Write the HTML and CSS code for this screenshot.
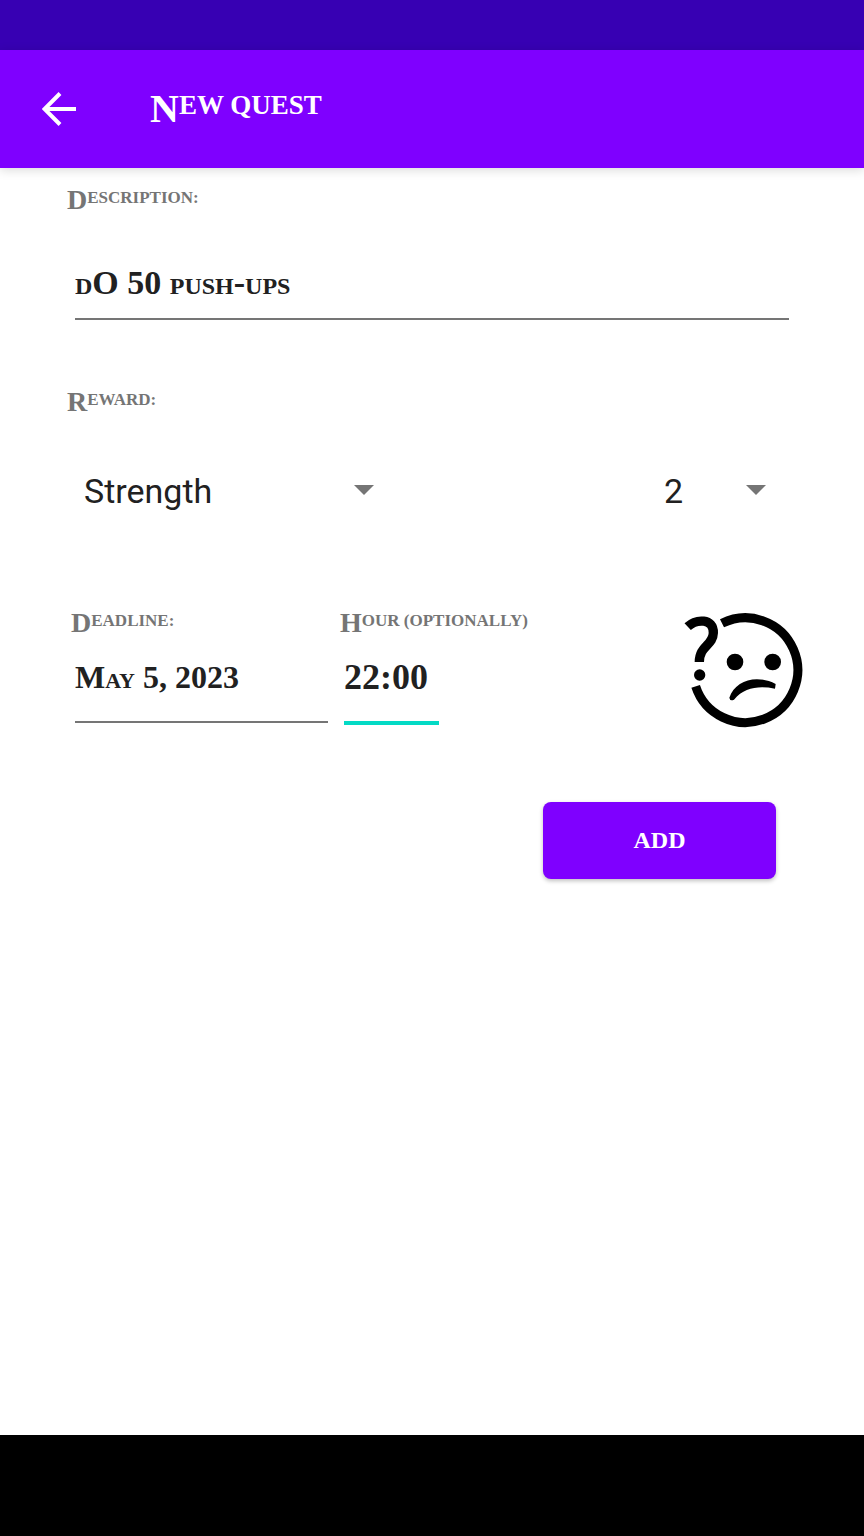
FILE: index.html
```html
<!DOCTYPE html>
<html lang="en">
<head>
<meta charset="utf-8">
<meta name="viewport" content="width=device-width, initial-scale=1">
<title>New quest</title>
<link rel="stylesheet" href="styles.css">
</head>
<body>
<div class="status-bar"></div>
<header class="app-bar">
  <button class="back" type="button" aria-label="Back">
    <svg viewBox="0 0 34 34" width="34" height="34"><path d="M18 1.5 L2.5 17 L18 32.5 M2.5 17 H34" fill="none" stroke="#fff" stroke-width="4"/></svg>
  </button>
  <h1 class="title">New quest</h1>
</header>
<main class="page">
  <form class="form">
    <label class="label" for="description">Description:</label>
    <input class="field field-description" id="description" type="text" value="dO 50 push-ups">

    <label class="label" for="reward">Reward:</label>
    <div class="reward-row">
      <div class="picker picker-skill">
        <select class="select" id="reward"><option>Strength</option></select>
      </div>
      <div class="picker picker-amount">
        <select class="select" aria-label="Reward amount"><option>2</option></select>
      </div>
    </div>

    <div class="when-row">
      <div class="when-date">
        <label class="label" for="deadline">Deadline:</label>
        <input class="field field-date" id="deadline" type="text" value="May 5, 2023">
      </div>
      <div class="when-hour">
        <label class="label" for="hour">Hour (optionally)</label>
        <input class="field field-hour" id="hour" type="text" value="22:00">
      </div>
      <button class="help" type="button" aria-label="Help">
        <svg viewBox="72 60 360 354" width="120" height="118">
          <path d="M186 97 A157 157 0 1 1 107 286" fill="none" stroke="#000" stroke-width="27"/>
          <path d="M83 107 C108 84 161 80 160 126 C159 163 118 164 118 213" fill="none" stroke="#000" stroke-width="28"/>
          <circle cx="119" cy="252" r="17"/>
          <circle cx="225" cy="213" r="25"/>
          <circle cx="338" cy="213" r="25"/>
          <path d="M208 320 C226 267 290 249 347 279 L345 293 C298 284 254 288 222 326 Q210 332 208 320 Z"/>
        </svg>
      </button>
    </div>

    <button class="add" type="button">ADD</button>
  </form>
</main>
<div class="nav-bar"></div>
</body>
</html>
```
FILE: styles.css
```css
* {
  box-sizing: border-box;
}

body {
  margin: 0;
  min-height: 100vh;
  display: flex;
  flex-direction: column;
  background: #fff;
  color: #212121;
  font-family: "Liberation Serif", "Times New Roman", serif;
  font-weight: 700;
}

button {
  margin: 0;
  padding: 0;
  border: 0;
  background: none;
  font: inherit;
}

svg {
  display: block;
}

.status-bar {
  height: 50px;
  background: #3700b3;
}

.app-bar {
  display: flex;
  align-items: center;
  gap: 74px;
  height: 118px;
  padding: 0 42px;
  background: #7f00ff;
  box-shadow: 0 2px 10px rgba(0, 0, 0, 0.15);
}

.title {
  margin: 0;
  padding-bottom: 4px;
  color: #fff;
  font-size: 27px;
  line-height: 40px;
  text-transform: uppercase;
}

.title::first-letter {
  font-size: 40px;
  line-height: 40px;
  vertical-align: -8px;
}

.page {
  flex: 1;
  padding: 16px 60px 0 67px;
}

.form {
  display: flex;
  flex-direction: column;
}

.label {
  display: block;
  height: 32px;
  color: #757575;
  font-size: 17px;
  line-height: 28px;
  text-transform: uppercase;
  white-space: nowrap;
}

.label::first-letter {
  font-size: 28px;
  line-height: 28px;
  vertical-align: -6px;
}

.field {
  display: block;
  min-width: 0;
  padding: 0;
  border: 0;
  border-bottom: 2px solid #757575;
  border-radius: 0;
  outline: 0;
  background: none;
  color: #212121;
  font-family: inherit;
  font-size: 34px;
  font-weight: 700;
  font-variant: small-caps;
}

.field-description {
  height: 72px;
  margin: 32px 15px 66px 8px;
}

.reward-row {
  display: flex;
  justify-content: space-between;
  margin: 43px 38px 86px 17px;
}

.picker {
  position: relative;
}

.picker::after {
  content: "";
  position: absolute;
  top: 24px;
  right: 0;
  border: 10px solid transparent;
  border-top-color: #757575;
  border-bottom-width: 0;
  pointer-events: none;
}

.picker-skill {
  width: 290px;
}

.picker-amount {
  width: 102px;
}

.select {
  width: 100%;
  height: 60px;
  padding: 0;
  border: 0;
  appearance: none;
  background: none;
  color: #212121;
  font: 400 34px Roboto, sans-serif;
}

.when-row {
  display: flex;
  gap: 12px;
  padding-left: 4px;
}

.when-date {
  width: 257px;
}

.when-hour {
  width: 200px;
}

.field-date {
  width: 253px;
  height: 84px;
  margin-left: 4px;
  padding-bottom: 6px;
  font-size: 32px;
}

.field-hour {
  width: 95px;
  height: 86px;
  margin-left: 4px;
  padding-bottom: 6px;
  border-bottom: 4px solid #03dac5;
  font-size: 36px;
}

.help {
  align-self: flex-start;
  margin-left: auto;
  padding-top: 4px;
}

.add {
  align-self: flex-end;
  width: 233px;
  height: 77px;
  margin: 73px 28px 0 0;
  border-radius: 8px;
  background: #7f00ff;
  box-shadow: 0 2px 4px rgba(0, 0, 0, 0.25);
  color: #fff;
  font-size: 24px;
}

.nav-bar {
  height: 101px;
  background: #000;
}
```
